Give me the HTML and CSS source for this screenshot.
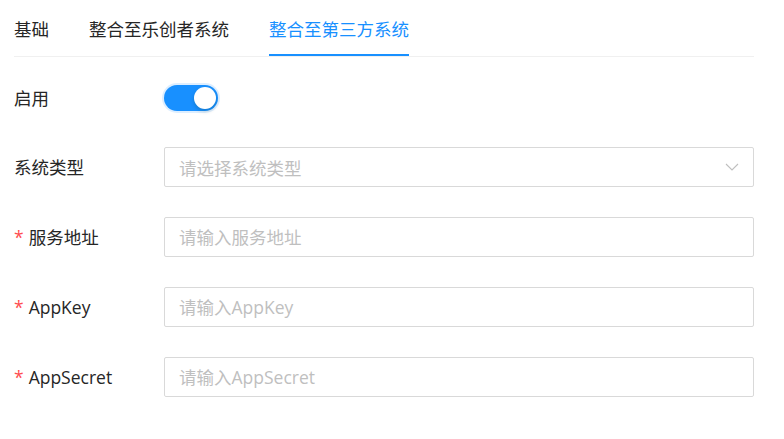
FILE: index.html
```html
<!DOCTYPE html>
<html lang="zh-CN">
<head>
<meta charset="utf-8">
<title>整合至第三方系统</title>
<link rel="stylesheet" href="styles.css">
</head>
<body>
<div class="page">
  <div class="tabs">
    <div class="tab">基础</div>
    <div class="tab">整合至乐创者系统</div>
    <div class="tab active">整合至第三方系统</div>
  </div>
  <form class="form">
    <div class="row row-first">
      <label class="label">启用</label>
      <div class="control">
        <span class="switch"><span class="knob"></span></span>
      </div>
    </div>
    <div class="row">
      <label class="label">系统类型</label>
      <div class="control">
        <div class="select">
          <span class="placeholder">请选择系统类型</span>
          <svg class="arrow" width="14" height="8" viewBox="0 0 14 8"><path d="M1 1 L7 7 L13 1" fill="none" stroke="#bfbfbf" stroke-width="1.1"/></svg>
        </div>
      </div>
    </div>
    <div class="row">
      <label class="label"><span class="req">*</span>服务地址</label>
      <div class="control"><input class="input" placeholder="请输入服务地址"></div>
    </div>
    <div class="row">
      <label class="label"><span class="req">*</span>AppKey</label>
      <div class="control"><input class="input" placeholder="请输入AppKey"></div>
    </div>
    <div class="row">
      <label class="label"><span class="req">*</span>AppSecret</label>
      <div class="control"><input class="input" placeholder="请输入AppSecret"></div>
    </div>
  </form>
</div>
</body>
</html>
```
FILE: styles.css
```css
* { box-sizing: border-box; }
html, body { margin: 0; padding: 0; background: #fff; }
body {
  font-family: "Open Sans", "Noto Sans CJK SC", sans-serif;
  font-size: 17.5px;
  color: #262626;
}
.page { width: 740px; margin-left: 14px; }
.tabs {
  display: flex;
  gap: 40px;
  border-bottom: 1px solid #f0f0f0;
}
.tab {
  padding: 17px 0 13px;
  line-height: 24px;
  border-bottom: 2px solid transparent;
}
.tab.active { color: #1890ff; border-bottom-color: #1890ff; }
.form {
  display: flex;
  flex-direction: column;
  gap: 30px;
  margin-top: 21px;
}
.row { display: flex; align-items: center; height: 40px; }
.row-first { height: 39px; }
.label { width: 150px; flex: none; line-height: 24px; }
.req { color: #ff4d4f; margin-right: 5px; }
.control { flex: 1; display: flex; align-items: center; }
.switch {
  position: relative;
  display: inline-block;
  width: 54px;
  height: 26px;
  border-radius: 13px;
  background: #1890ff;
  box-shadow: 0 0 0 2px rgba(24, 144, 255, 0.15);
}
.knob {
  position: absolute;
  top: 2px;
  right: 2px;
  width: 22px;
  height: 22px;
  border-radius: 50%;
  background: #fff;
  box-shadow: 0 2px 4px rgba(0, 35, 11, 0.2);
}
.select, .input {
  width: 590px;
  height: 40px;
  border: 1px solid #d9d9d9;
  border-radius: 2px;
  background: #fff;
  padding: 0 14px;
  font: inherit;
  color: #262626;
}
.select { display: flex; align-items: center; justify-content: space-between; }
.placeholder { color: #bfbfbf; }
.input::placeholder { color: #bfbfbf; opacity: 1; }
```
